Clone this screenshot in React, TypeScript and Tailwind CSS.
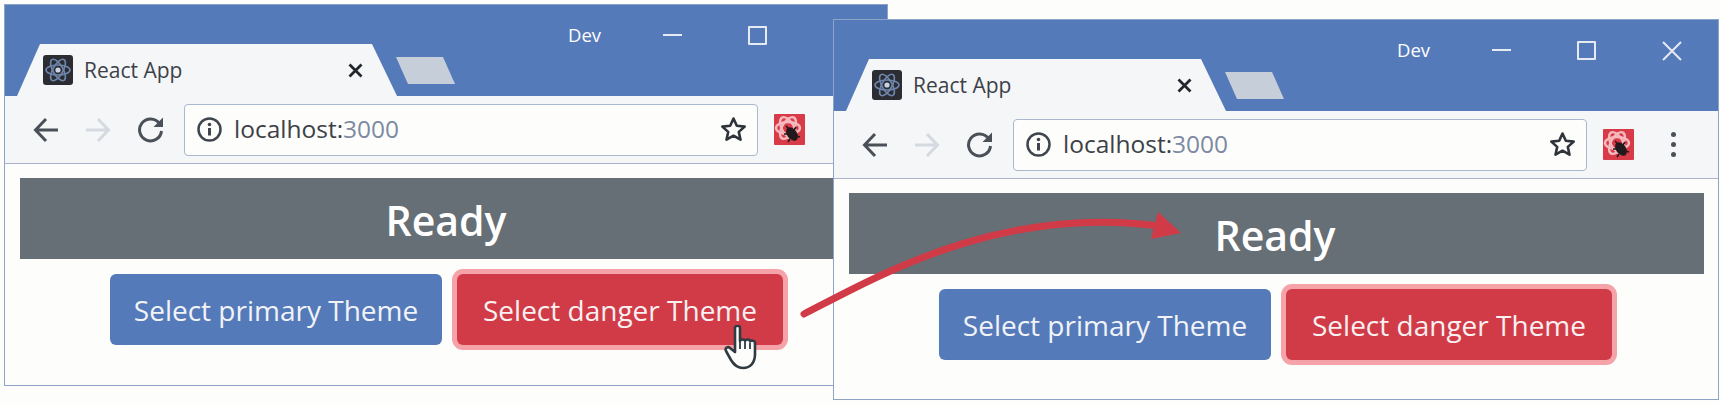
import React from 'react';

const FONT = "font-['Open_Sans',sans-serif]";

// Dark tab favicon with the React atom
const Favicon = () => (
  <svg width="30" height="30" viewBox="0 0 30 30" className="shrink-0">
    <rect width="30" height="30" rx="3" fill="#2b2d33" />
    <g fill="none" stroke="#6f86ad" strokeWidth="1.6">
      <ellipse cx="15" cy="15" rx="12" ry="5" />
      <ellipse cx="15" cy="15" rx="12" ry="5" transform="rotate(60 15 15)" />
      <ellipse cx="15" cy="15" rx="12" ry="5" transform="rotate(120 15 15)" />
    </g>
    <circle cx="15" cy="15" r="2.6" fill="#c9d3e3" />
  </svg>
);

// Red extension button with a bug on the atom
const ExtensionIcon = () => (
  <svg width="31" height="31" viewBox="0 0 31 31" className="shrink-0">
    <rect width="31" height="31" rx="1" fill="#d93a48" />
    <g fill="none" stroke="#f6b9bd" strokeWidth="2.4">
      <ellipse cx="14" cy="14" rx="12" ry="6" />
      <ellipse cx="14" cy="14" rx="12" ry="6" transform="rotate(60 14 14)" />
      <ellipse cx="14" cy="14" rx="12" ry="6" transform="rotate(120 14 14)" />
    </g>
    <ellipse cx="18" cy="20" rx="5" ry="7.5" transform="rotate(-35 18 20)" fill="#23191c" />
    <path d="M12 12l3 3M22 13l-2 3M10 20l4 0M26 23l-4-1M14 28l2-3" stroke="#23191c" strokeWidth="1.6" />
  </svg>
);

const Toolbar = ({ showMenu }: { showMenu: boolean }) => (
  <div className="flex h-[68px] items-center border-b border-[#a9b4cc] bg-[#f5f6f8] pl-[28px]">
    {/* back */}
    <svg width="26" height="26" viewBox="0 0 26 26" fill="none" stroke="#4a5058" strokeWidth="3" className="shrink-0">
      <path d="M25 13H3M13 2L2.500 13 13 24" />
    </svg>
    {/* forward */}
    <svg width="26" height="26" viewBox="0 0 26 26" fill="none" stroke="#d5d9e0" strokeWidth="3" className="ml-[26px] shrink-0">
      <path d="M1 13h22M13 2l10.500 11L13 24" />
    </svg>
    {/* reload */}
    <svg width="27" height="27" viewBox="0 0 27 27" fill="none" className="ml-[26px] shrink-0">
      <path d="M22.500 7.500A11 11 0 1 0 24.500 15" stroke="#4a5058" strokeWidth="3" />
      <path d="M26 1.500V11H16.500z" fill="#4a5058" />
    </svg>
    <div className="ml-[20px] flex h-[52px] w-[574px] shrink-0 items-center rounded-[4px] border border-[#a9b8ce] bg-[#fdfdfb] pl-[12px] pr-[10px]">
      {/* info */}
      <svg width="25" height="25" viewBox="0 0 25 25" fill="none" className="shrink-0">
        <circle cx="12.500" cy="12.500" r="11" stroke="#3f454d" strokeWidth="2.500" />
        <path d="M12.500 11v7.500" stroke="#3f454d" strokeWidth="3" />
        <circle cx="12.500" cy="7.500" r="1.800" fill="#3f454d" />
      </svg>
      <span className={`ml-[12px] text-[24.500px] leading-none text-[#3c4148] ${FONT}`}>
        localhost:<span className="text-[#7d8aa3]">3000</span>
      </span>
      <svg width="27" height="27" viewBox="0 0 27 27" fill="none" className="ml-auto shrink-0">
        <path d="M13.500 2.500l3.300 7.300 7.900.8-5.900 5.300 1.700 7.800-7-4-7 4 1.700-7.800-5.900-5.300 7.900-.8z" stroke="#2f343b" strokeWidth="2.600" strokeLinejoin="round" />
      </svg>
    </div>
    <div className="ml-[16px]">
      <ExtensionIcon />
    </div>
    {showMenu && (
      <div className="ml-[37px] flex flex-col gap-[5px]">
        <span className="h-[5px] w-[5px] rounded-full bg-[#4a5058]" />
        <span className="h-[5px] w-[5px] rounded-full bg-[#4a5058]" />
        <span className="h-[5px] w-[5px] rounded-full bg-[#4a5058]" />
      </div>
    )}
  </div>
);

const BrowserWindow = ({ className, second }: { className: string; second: boolean }) => (
  <div className={`absolute overflow-hidden border border-[#8ea3c8] bg-[#fdfdfb] ${className}`}>
    <div className="flex h-full w-[884px] flex-col">
      {/* title bar */}
      <div className="flex h-[91px] shrink-0 items-end bg-[#557ab9] pl-[12px]">
        <div className="flex h-[52px] w-[380px] shrink-0 items-center bg-[#f5f6f8] pl-[26px] [clip-path:polygon(23px_0,355px_0,380px_52px,0_52px)]">
          <Favicon />
          <span className={`ml-[11px] text-[21px] leading-none text-[#3c4148] ${FONT}`}>React App</span>
          <svg width="15" height="15" viewBox="0 0 15 15" stroke="#23272c" strokeWidth="2.800" className="ml-[166px] shrink-0">
            <path d="M1.500 1.500l12 12M13.500 1.500l-12 12" />
          </svg>
        </div>
        <div className="mb-[12px] ml-[-1px] h-[27px] w-[59px] shrink-0 bg-[#c6ced9] [clip-path:polygon(0_0,47px_0,59px_27px,12px_27px)]" />
        <div className="flex h-full flex-1 items-start pt-[21px]">
          <span className={`ml-[113px] mt-[-2px] text-[18.500px] leading-[22px] text-white ${FONT}`}>Dev</span>
          <span className="ml-[62px] mt-[8px] h-[2px] w-[19px] bg-[#e6ebf3]" />
          <span className="ml-[66px] h-[19px] w-[19px] rounded-[1px] border-2 border-[#e6ebf3]" />
          {second && (
            <svg width="20" height="20" viewBox="0 0 20 20" stroke="#e6ebf3" strokeWidth="2" className="ml-[66px] shrink-0">
              <path d="M1 1l18 18M19 1L1 19" />
            </svg>
          )}
        </div>
      </div>
      <Toolbar showMenu={second} />
      {/* page content */}
      <div className={`flex flex-1 flex-col pl-[15px] pr-[14px] pt-[14px] ${FONT}`}>
        <div className="flex h-[81px] items-center justify-center bg-[#666f75] pr-[3px] pt-[5px] text-[41px] font-semibold text-white">
          Ready
        </div>
        <div className="mt-[15px] flex justify-center gap-[15px] pr-[2px]">
          <button className="h-[71px] w-[332px] rounded-[6px] bg-[#557ab9] text-[28px] text-[#f1f3f7]">
            Select primary Theme
          </button>
          <button className="h-[71px] w-[326px] rounded-[6px] bg-[#d13b47] text-[28px] text-[#f8f0f1] ring-[5px] ring-[#f5a3a8]">
            Select danger Theme
          </button>
        </div>
      </div>
    </div>
  </div>
);

export default function App() {
  return (
    <div className="relative h-[405px] w-[1720px] overflow-hidden bg-[#fdfdfb]">
      <BrowserWindow className="left-[4px] top-[4px] h-[382px] w-[884px]" second={false} />
      <BrowserWindow className="left-[833px] top-[19px] h-[381px] w-[886px]" second={true} />

      {/* callout arrow between the two windows */}
      <svg width="1720" height="405" viewBox="0 0 1720 405" className="pointer-events-none absolute left-0 top-0">
        <path d="M804 314C880 275 1000 205 1160 226" fill="none" stroke="#d13b47" strokeWidth="7" strokeLinecap="round" />
        <path d="M1158 212L1181 233L1151 239z" fill="#d13b47" />
      </svg>

      {/* hand cursor over the danger button */}
      <svg width="38" height="46" viewBox="0 0 38 46" className="absolute left-[724px] top-[325px]">
        <path
          d="M11 3c0-3 5-3 5 0v13c1-2 5-2 5 0 1-2 5-2 5 .5 1-1.500 5-1 5 1.500v11c0 8-4 14-12 14-6 0-9-3-12-8L2 26c-1.500-3 2-5 4-3l5 4z"
          fill="#fdfdfb"
          stroke="#2f3a42"
          strokeWidth="2.600"
          strokeLinejoin="round"
        />
        <path d="M16 16v8M21 17v7M26 18v6" stroke="#2f3a42" strokeWidth="1.800" fill="none" />
      </svg>
    </div>
  );
}
